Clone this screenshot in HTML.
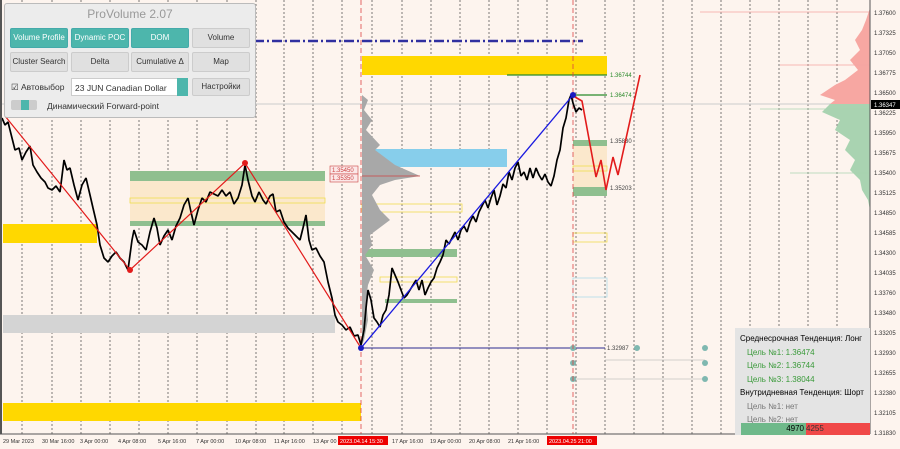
<!DOCTYPE html>
<html><head><meta charset="utf-8"><style>
body{margin:0;width:900px;height:449px;overflow:hidden;background:#fdf4ee;font-family:"Liberation Sans","Noto Sans CJK SC",sans-serif}
svg{position:absolute;left:0;top:0}
.panel{position:absolute;left:4px;top:3px;width:250px;height:113px;background:#ececec;border:1px solid #bbb;border-radius:3px;font-size:8.5px;color:#333}
.tb{height:20px;text-align:center;font-size:12px;color:#999;line-height:20px}
.btn{position:absolute;width:58px;height:20px;border-radius:2px;text-align:center;line-height:17px;font-size:8px;white-space:nowrap;overflow:hidden;background:#e0e0e0;border:1px solid #ccc;color:#333;box-sizing:border-box}
.g{background:#4db6ac;color:#fff;border-color:#4aa}
.info{position:absolute;left:735px;top:328px;width:135px;height:107px;background:#e4e4e4;font-size:8px;line-height:13.5px}
.info div{padding-left:5px}
.gr{color:#3a9a3a;padding-left:12px!important}
.gy{color:#777;padding-left:12px!important}
</style></head><body>
<svg width="900" height="449" viewBox="0 0 900 449" font-family="Liberation Sans" font-size="6">
<rect x="0" y="0" width="900" height="449" fill="#fdf4ee"/>
<g stroke="#444" stroke-width="0.7" stroke-dasharray="2,2">
<line x1="22" y1="0" x2="22" y2="434"/><line x1="52" y1="0" x2="52" y2="434"/><line x1="81" y1="0" x2="81" y2="434"/><line x1="110" y1="0" x2="110" y2="434"/><line x1="139" y1="0" x2="139" y2="434"/><line x1="168" y1="0" x2="168" y2="434"/><line x1="197" y1="0" x2="197" y2="434"/><line x1="227" y1="0" x2="227" y2="434"/><line x1="256" y1="0" x2="256" y2="434"/><line x1="284" y1="0" x2="284" y2="434"/><line x1="313" y1="0" x2="313" y2="434"/><line x1="342" y1="0" x2="342" y2="434"/><line x1="372" y1="0" x2="372" y2="434"/><line x1="402" y1="0" x2="402" y2="434"/><line x1="431" y1="0" x2="431" y2="434"/><line x1="460" y1="0" x2="460" y2="434"/><line x1="489" y1="0" x2="489" y2="434"/><line x1="518" y1="0" x2="518" y2="434"/><line x1="547" y1="0" x2="547" y2="434"/><line x1="576" y1="0" x2="576" y2="434"/><line x1="605" y1="0" x2="605" y2="434"/><line x1="634" y1="0" x2="634" y2="434"/><line x1="663" y1="0" x2="663" y2="434"/><line x1="692" y1="0" x2="692" y2="434"/><line x1="721" y1="0" x2="721" y2="434"/><line x1="750" y1="0" x2="750" y2="434"/><line x1="779" y1="0" x2="779" y2="434"/><line x1="808" y1="0" x2="808" y2="434"/><line x1="837" y1="0" x2="837" y2="434"/>
</g>
<line x1="0" y1="104" x2="870" y2="104" stroke="#ccc" stroke-width="1"/>
<rect x="3" y="224" width="94" height="19" fill="#ffd800"/>
<rect x="3" y="315" width="332" height="18" fill="#d4d4d4"/>
<rect x="3" y="403" width="358" height="18" fill="#ffd800"/>
<rect x="130" y="171" width="195" height="55" fill="#fbe8cc"/>
<rect x="130" y="171" width="195" height="10" fill="#8fbf8f"/>
<rect x="130" y="221" width="195" height="5" fill="#8fbf8f"/>
<rect x="130" y="198" width="195" height="5" fill="none" stroke="#f0dc50" stroke-width="0.8"/>
<rect x="362" y="56" width="245" height="19" fill="#ffd800"/>
<rect x="362" y="149" width="145" height="18" fill="#87ceeb"/>
<rect x="362" y="204" width="100" height="8" fill="none" stroke="#f0dc50" stroke-width="0.8"/>
<rect x="362" y="249" width="95" height="8" fill="#8fbf8f"/>
<rect x="380" y="277" width="77" height="5" fill="none" stroke="#f0dc50" stroke-width="0.8"/>
<rect x="385" y="299" width="72" height="4" fill="#8fbf8f"/>
<rect x="573" y="146" width="34" height="45" fill="#fbe8cc"/>
<rect x="573" y="140" width="34" height="6" fill="#8fbf8f"/>
<rect x="573" y="187" width="34" height="9" fill="#8fbf8f"/>
<rect x="573" y="166" width="34" height="5" fill="none" stroke="#f0dc50" stroke-width="0.8"/>
<rect x="573" y="233" width="34" height="9" fill="none" stroke="#f0dc50" stroke-width="0.8"/>
<rect x="573" y="278" width="34" height="19" fill="none" stroke="#b0dce8" stroke-width="0.8"/>
<path d="M362 95 L368 100 L364 110 L372 120 L366 130 L380 145 L375 150 L395 165 L420 176 L395 180 L380 185 L372 195 L380 210 L390 220 L370 235 L372 245 L365 255 L374 270 L368 285 L366 300 L368 320 L364 340 L362 345 Z" fill="#a8a8a8"/>
<line x1="362" y1="176" x2="420" y2="176" stroke="#c44" stroke-width="0.8"/>
<rect x="330" y="166" width="28" height="8" fill="#fbe8e8" stroke="#c44" stroke-width="0.6"/><text x="332" y="172" fill="#c44">1.35450</text>
<rect x="330" y="174" width="28" height="8" fill="#fbe8e8" stroke="#c44" stroke-width="0.6"/><text x="332" y="180" fill="#c44">1.35350</text>
<path d="M870 8 L866 20 L862 30 L855 40 L860 50 L850 60 L858 70 L845 80 L835 85 L820 95 L835 100 L830 104 L870 104 Z" fill="#f7a7a2"/>
<path d="M870 104 L830 104 L822 112 L840 120 L835 130 L850 140 L845 150 L855 160 L850 170 L860 180 L862 190 L868 200 L870 210 Z" fill="#a9d3b1"/>
<g stroke-width="0.7"><line x1="700" y1="12" x2="870" y2="12" stroke="#f3a5a0"/><line x1="780" y1="65" x2="870" y2="65" stroke="#f3a5a0"/><line x1="760" y1="109" x2="870" y2="109" stroke="#a9d3b1"/><line x1="790" y1="173" x2="870" y2="173" stroke="#a9d3b1"/></g>
<line x1="200" y1="41" x2="583" y2="41" stroke="#3030a0" stroke-width="2.5" stroke-dasharray="10,3,2,3"/>
<line x1="507" y1="75" x2="607" y2="75" stroke="#2a8a2a" stroke-width="1.2"/>
<line x1="573" y1="95" x2="607" y2="95" stroke="#2a8a2a" stroke-width="1.2"/>
<line x1="361" y1="348" x2="605" y2="348" stroke="#2a2a90" stroke-width="1"/>
<line x1="605" y1="360" x2="705" y2="360" stroke="#aaa" stroke-width="0.5"/><line x1="573" y1="379" x2="705" y2="379" stroke="#aaa" stroke-width="0.5"/>
<g fill="#7fb8b0"><circle cx="573" cy="348" r="3"/><circle cx="637" cy="348" r="3"/><circle cx="705" cy="348" r="3"/><circle cx="573" cy="363" r="3"/><circle cx="705" cy="363" r="3"/><circle cx="573" cy="379" r="3"/><circle cx="705" cy="379" r="3"/></g>
<line x1="361" y1="0" x2="361" y2="434" stroke="#d44" stroke-width="0.8" stroke-dasharray="5,3"/>
<line x1="573" y1="0" x2="573" y2="434" stroke="#d44" stroke-width="0.8" stroke-dasharray="5,3"/>
<text x="610" y="77" fill="#2a8a2a">1.36744</text><text x="610" y="97" fill="#2a8a2a">1.36474</text>
<text x="610" y="143" fill="#444">1.35830</text><text x="610" y="190" fill="#444">1.35203</text><text x="607" y="350" fill="#444">1.32987</text>
<polyline fill="none" stroke="#000" stroke-width="1.7" stroke-linejoin="bevel" points="2,118 5,125 8,122 12,138 15,150 19,148 22,160 26,152 30,146 33,165 37,172 41,178 45,182 48,188 52,190 56,186 60,192 64,160 67,170 70,168 74,185 78,200 82,185 86,178 90,195 93,208 97,225 100,245 104,258 108,262 112,256 116,252 120,258 124,262 128,270 132,240 134,230 138,242 142,245 146,250 150,232 154,218 157,228 160,245 164,236 168,230 172,240 176,226 180,218 184,205 188,198 191,212 194,225 198,210 202,198 206,202 210,192 214,194 218,196 222,190 226,196 230,192 234,204 238,198 242,185 245,165 248,180 252,196 255,202 259,192 263,200 266,204 270,196 273,194 276,212 280,210 284,222 288,228 292,232 296,236 300,240 303,228 306,215 309,240 312,250 316,248 320,256 324,262 328,282 332,298 335,315 338,322 342,325 346,330 350,327 354,336 358,335 361,345 364,330 366,308 368,290 371,300 374,318 377,322 380,327 383,315 386,310 389,295 392,268 395,275 398,282 401,290 404,298 407,295 410,290 413,285 416,280 419,290 422,280 425,295 428,288 431,282 434,278 437,268 440,262 443,255 446,240 449,244 452,238 455,232 458,240 461,230 464,226 467,232 470,222 473,216 476,222 479,212 482,206 485,200 488,208 491,198 494,190 497,205 500,196 503,184 506,188 509,172 512,180 515,168 518,162 521,176 524,172 527,180 530,168 533,178 536,168 539,175 542,180 545,174 548,182 551,186 554,176 557,160 560,150 563,128 566,118 569,100 571,95 573,103 576,112 579,108 582,110"/>
<polyline fill="none" stroke="#e21b1b" stroke-width="1.2" points="5,116 130,270 245,163 361,348"/>
<polyline fill="none" stroke="#e21b1b" stroke-width="1.6" points="575,97 582,101 596,177 601,160 606,190 613,157 618,175 640,75"/>
<line x1="361" y1="348" x2="573" y2="95" stroke="#1a1ae0" stroke-width="1.3"/>
<circle cx="130" cy="270" r="3" fill="#e21b1b"/><circle cx="245" cy="163" r="3" fill="#e21b1b"/><circle cx="361" cy="348" r="3" fill="#1a1ac0"/><circle cx="573" cy="95" r="3" fill="#1a1ac0"/>
<line x1="870" y1="0" x2="870" y2="434" stroke="#555" stroke-width="1"/>
<line x1="0" y1="434" x2="870" y2="434" stroke="#555" stroke-width="1"/>
<rect x="0" y="0" width="2" height="434" fill="#555"/>
<g fill="#333" font-size="6">
<text x="874" y="15">1.37600</text><text x="874" y="35">1.37325</text><text x="874" y="55">1.37050</text><text x="874" y="75">1.36775</text><text x="874" y="95">1.36500</text><text x="874" y="115">1.36225</text><text x="874" y="135">1.35950</text><text x="874" y="155">1.35675</text><text x="874" y="175">1.35400</text><text x="874" y="195">1.35125</text><text x="874" y="215">1.34850</text><text x="874" y="235">1.34585</text><text x="874" y="255">1.34300</text><text x="874" y="275">1.34035</text><text x="874" y="295">1.33760</text><text x="874" y="315">1.33480</text><text x="874" y="335">1.33205</text><text x="874" y="355">1.32930</text><text x="874" y="375">1.32655</text><text x="874" y="395">1.32380</text><text x="874" y="415">1.32105</text><text x="874" y="435">1.31830</text>
</g>
<rect x="871" y="100" width="29" height="9" fill="#000"/><text x="874" y="107" fill="#fff">1.36347</text>
<g fill="#333" font-size="5.5">
<text x="3" y="443">29 Mar 2023</text><text x="42" y="443">30 Mar 16:00</text><text x="80" y="443">3 Apr 00:00</text><text x="118" y="443">4 Apr 08:00</text><text x="158" y="443">5 Apr 16:00</text><text x="196" y="443">7 Apr 00:00</text><text x="235" y="443">10 Apr 08:00</text><text x="274" y="443">11 Apr 16:00</text><text x="313" y="443">13 Apr 00</text>
<text x="392" y="443">17 Apr 16:00</text><text x="430" y="443">19 Apr 00:00</text><text x="469" y="443">20 Apr 08:00</text><text x="508" y="443">21 Apr 16:00</text>
</g>
<rect x="338" y="436" width="50" height="9" fill="#e00"/><text x="340" y="443" fill="#fff" font-size="5.5">2023.04.14 15:30</text>
<rect x="547" y="436" width="50" height="9" fill="#e00"/><text x="549" y="443" fill="#fff" font-size="5.5">2023.04.25 21:00</text>
</svg>
<div class="panel">
<div class="tb">ProVolume 2.07</div>
<div class="btn g" style="left:5px;top:24px">Volume Profile</div>
<div class="btn g" style="left:66px;top:24px">Dynamic POC</div>
<div class="btn g" style="left:126px;top:24px">DOM</div>
<div class="btn" style="left:187px;top:24px">Volume</div>
<div class="btn" style="left:5px;top:48px">Cluster Search</div>
<div class="btn" style="left:66px;top:48px">Delta</div>
<div class="btn" style="left:126px;top:48px">Cumulative Δ</div>
<div class="btn" style="left:187px;top:48px">Map</div>
<div style="position:absolute;left:6px;top:78px">☑ Автовыбор</div>
<div style="position:absolute;left:66px;top:74px;width:117px;height:18px;background:#fff;border:1px solid #ccc;line-height:18px;padding-left:3px;box-sizing:border-box">23 JUN Canadian Dollar</div>
<div style="position:absolute;left:172px;top:74px;width:11px;height:18px;background:#4db6ac"></div>
<div class="btn" style="left:187px;top:74px;height:18px;line-height:16px">Настройки</div>
<div style="position:absolute;left:6px;top:96px;width:26px;height:10px;background:#ccc;border-radius:2px"><div style="margin-left:10px;width:8px;height:10px;background:#4db6ac"></div></div>
<div style="position:absolute;left:42px;top:97px">Динамический Forward-point</div>
</div>
<div class="info">
<div style="margin-top:4px">Среднесрочная Тенденция: Лонг</div>
<div class="gr">Цель №1: 1.36474</div>
<div class="gr">Цель №2: 1.36744</div>
<div class="gr">Цель №3: 1.38044</div>
<div>Внутридневная Тенденция: Шорт</div>
<div class="gy">Цель №1: нет</div>
<div class="gy" style="height:12px;overflow:hidden">Цель №2: нет</div>
</div>
<div style="position:absolute;left:741px;top:423px;width:63px;height:12px;background:#6fb98a;font-size:8px;text-align:right;line-height:12px;padding-right:2px">4970</div>
<div style="position:absolute;left:806px;top:423px;width:64px;height:12px;background:#f04848;font-size:8px;line-height:12px;color:#333">4255</div>
</body></html>
